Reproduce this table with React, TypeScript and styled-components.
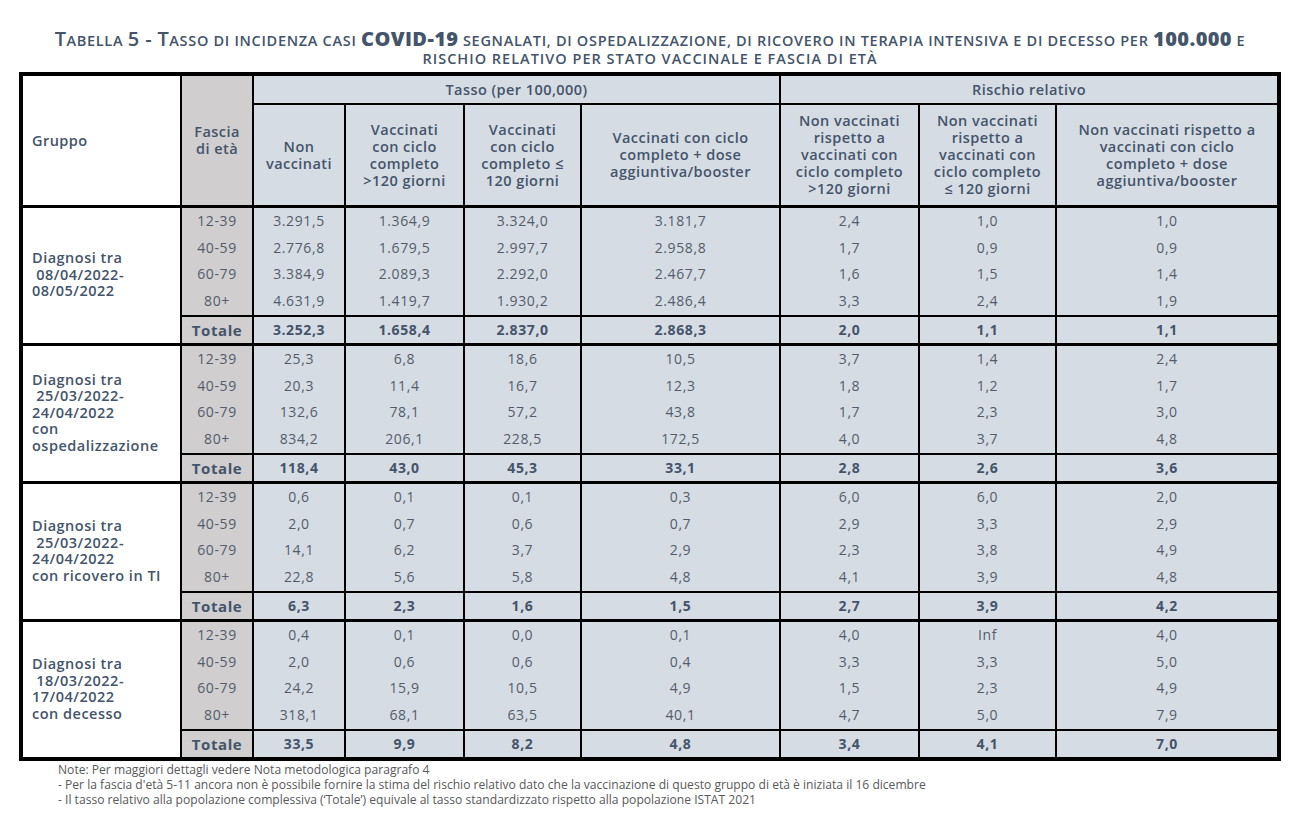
import React from "react";
import styled, { createGlobalStyle } from "styled-components";

const GlobalStyle = createGlobalStyle`
  html, body { margin: 0; padding: 0; background: #ffffff; }
  body { font-family: "Open Sans", Lato, sans-serif; }
`;

const Page = styled.div`
  width: 1300px;
  height: 820px;
  box-sizing: border-box;
  padding-top: 29px;
  display: flex;
  flex-direction: column;
  align-items: stretch;
`;

const Title = styled.h1`
  margin: 0;
  display: flex;
  flex-direction: column;
  align-items: center;
  font-family: "Open Sans", sans-serif;
  text-transform: uppercase;
  font-weight: 600;
  font-size: 14.5px;
  letter-spacing: 0.7px;
  color: #44546a;
  white-space: nowrap;
`;

const TitleLine = styled.span<{ $wide?: boolean }>`
  display: block;
  height: 20px;
  line-height: 20px;
  letter-spacing: ${(p) => (p.$wide ? "1px" : "inherit")};
`;

const Big = styled.span<{ $strong?: boolean }>`
  font-size: 20px;
  font-weight: ${(p) => (p.$strong ? 800 : 600)};
  letter-spacing: 0.4px;
`;

const Table = styled.table`
  margin: 3px 0 0 19px;
  width: 1258px;
  border-collapse: collapse;
  table-layout: fixed;
  border: 4px solid #000;
  font-family: "Open Sans", sans-serif;
  color: #44546a;
`;

const HeadCell = styled.th<{ $bg?: string; $align?: string; $h?: number }>`
  background: ${(p) => p.$bg || "#d6dce4"};
  border: 2px solid #000;
  font-weight: 600;
  font-size: 14.5px;
  letter-spacing: 0.45px;
  line-height: 17px;
  text-align: ${(p) => p.$align || "center"};
  vertical-align: middle;
  padding: ${(p) => (p.$align === "left" ? "0 6px 0 9px" : "0 2px")};
  height: ${(p) => p.$h ?? 28}px;
  box-sizing: border-box;
  color: #44546a;
`;

const Block = styled.tbody`
  border-top: 3px solid #000;
`;

const Row = styled.tr<{ $total?: boolean }>`
  border-top: ${(p) => (p.$total ? "2px solid #000" : "none")};
`;

const GroupCell = styled.td`
  background: #ffffff;
  border-left: 2px solid #000;
  border-right: 2px solid #000;
  font-weight: 600;
  font-size: 14.5px;
  letter-spacing: 0.5px;
  line-height: 16.5px;
  padding: 0 4px 0 9px;
  text-align: left;
  vertical-align: middle;
  white-space: pre;
  color: #44546a;
`;

const Cell = styled.td<{ $age?: boolean; $total?: boolean }>`
  background: ${(p) => (p.$age ? "#d0cece" : "#d6dce4")};
  border-left: 2px solid #000;
  border-right: 2px solid #000;
  text-align: center;
  vertical-align: middle;
  padding: 0;
  height: ${(p) => (p.$total ? 26 : 26.75)}px;
  font-size: ${(p) => (p.$age && p.$total ? 15 : 14)}px;
  letter-spacing: 0.6px;
  font-weight: ${(p) => (p.$total ? 700 : 400)};
  color: ${(p) => (p.$total ? "#44546a" : "#535c6b")};
  line-height: 16px;
`;

const Notes = styled.div`
  margin: 1px 0 0 58px;
  font-family: "Open Sans", sans-serif;
  font-size: 12.1px;
  line-height: 15px;
  color: #595959;
`;

type BlockData = {
  label: string;
  rows: string[][];
  total: string[];
};

const AGES = ["12-39", "40-59", "60-79", "80+"];

const BLOCKS: BlockData[] = [
  {
    label: "Diagnosi tra\n 08/04/2022-\n08/05/2022",
    rows: [
      ["3.291,5", "1.364,9", "3.324,0", "3.181,7", "2,4", "1,0", "1,0"],
      ["2.776,8", "1.679,5", "2.997,7", "2.958,8", "1,7", "0,9", "0,9"],
      ["3.384,9", "2.089,3", "2.292,0", "2.467,7", "1,6", "1,5", "1,4"],
      ["4.631,9", "1.419,7", "1.930,2", "2.486,4", "3,3", "2,4", "1,9"],
    ],
    total: ["3.252,3", "1.658,4", "2.837,0", "2.868,3", "2,0", "1,1", "1,1"],
  },
  {
    label: "Diagnosi tra\n 25/03/2022-\n24/04/2022\ncon\nospedalizzazione",
    rows: [
      ["25,3", "6,8", "18,6", "10,5", "3,7", "1,4", "2,4"],
      ["20,3", "11,4", "16,7", "12,3", "1,8", "1,2", "1,7"],
      ["132,6", "78,1", "57,2", "43,8", "1,7", "2,3", "3,0"],
      ["834,2", "206,1", "228,5", "172,5", "4,0", "3,7", "4,8"],
    ],
    total: ["118,4", "43,0", "45,3", "33,1", "2,8", "2,6", "3,6"],
  },
  {
    label: "Diagnosi tra\n 25/03/2022-\n24/04/2022\ncon ricovero in TI",
    rows: [
      ["0,6", "0,1", "0,1", "0,3", "6,0", "6,0", "2,0"],
      ["2,0", "0,7", "0,6", "0,7", "2,9", "3,3", "2,9"],
      ["14,1", "6,2", "3,7", "2,9", "2,3", "3,8", "4,9"],
      ["22,8", "5,6", "5,8", "4,8", "4,1", "3,9", "4,8"],
    ],
    total: ["6,3", "2,3", "1,6", "1,5", "2,7", "3,9", "4,2"],
  },
  {
    label: "Diagnosi tra\n 18/03/2022-\n17/04/2022\ncon decesso",
    rows: [
      ["0,4", "0,1", "0,0", "0,1", "4,0", "Inf", "4,0"],
      ["2,0", "0,6", "0,6", "0,4", "3,3", "3,3", "5,0"],
      ["24,2", "15,9", "10,5", "4,9", "1,5", "2,3", "4,9"],
      ["318,1", "68,1", "63,5", "40,1", "4,7", "5,0", "7,9"],
    ],
    total: ["33,5", "9,9", "8,2", "4,8", "3,4", "4,1", "7,0"],
  },
];

const COLS = [160, 72, 92, 119, 117, 199, 139, 137, 223];

const SUBHEADS: React.ReactNode[] = [
  <>Non<br />vaccinati</>,
  <>Vaccinati<br />con ciclo<br />completo<br />&gt;120 giorni</>,
  <>Vaccinati<br />con ciclo<br />completo ≤<br />120 giorni</>,
  <>Vaccinati con ciclo<br />completo + dose<br />aggiuntiva/booster</>,
  <>Non vaccinati<br />rispetto a<br />vaccinati con<br />ciclo completo<br />&gt;120 giorni</>,
  <>Non vaccinati<br />rispetto a<br />vaccinati con<br />ciclo completo<br />≤ 120 giorni</>,
  <>Non vaccinati rispetto a<br />vaccinati con ciclo<br />completo + dose<br />aggiuntiva/booster</>,
];

export default function App() {
  return (
    <>
      <GlobalStyle />
      <Page>
        <Title>
          <TitleLine>
            <Big>T</Big>abella <Big>5 - T</Big>asso di incidenza casi{" "}
            <Big $strong>COVID-19</Big> segnalati, di ospedalizzazione, di ricovero in terapia
            intensiva e di decesso per <Big $strong>100.000</Big> e
          </TitleLine>
          <TitleLine $wide>rischio relativo per stato vaccinale e fascia di età</TitleLine>
        </Title>
        <Table>
          <colgroup>
            {COLS.map((w, i) => (
              <col key={i} style={{ width: w }} />
            ))}
          </colgroup>
          <thead>
            <tr>
              <HeadCell rowSpan={2} $bg="#ffffff" $align="left">
                Gruppo
              </HeadCell>
              <HeadCell rowSpan={2} $bg="#d0cece">
                Fascia
                <br />
                di età
              </HeadCell>
              <HeadCell colSpan={4} $h={30}>
                Tasso (per 100,000)
              </HeadCell>
              <HeadCell colSpan={3} $h={30}>
                Rischio relativo
              </HeadCell>
            </tr>
            <tr>
              {SUBHEADS.map((h, i) => (
                <HeadCell key={i} $h={102}>
                  {h}
                </HeadCell>
              ))}
            </tr>
          </thead>
          {BLOCKS.map((b, bi) => (
            <Block key={bi}>
              {b.rows.map((r, ri) => (
                <Row key={ri}>
                  {ri === 0 && <GroupCell rowSpan={5}>{b.label}</GroupCell>}
                  <Cell $age>{AGES[ri]}</Cell>
                  {r.map((v, vi) => (
                    <Cell key={vi}>{v}</Cell>
                  ))}
                </Row>
              ))}
              <Row $total>
                <Cell $age $total>
                  Totale
                </Cell>
                {b.total.map((v, vi) => (
                  <Cell key={vi} $total>
                    {v}
                  </Cell>
                ))}
              </Row>
            </Block>
          ))}
        </Table>
        <Notes>
          Note: Per maggiori dettagli vedere Nota metodologica paragrafo 4
          <br />- Per la fascia d'età 5-11 ancora non è possibile fornire la stima del rischio
          relativo dato che la vaccinazione di questo gruppo di età è iniziata il 16 dicembre
          <br />- Il tasso relativo alla popolazione complessiva (‘Totale’) equivale al tasso
          standardizzato rispetto alla popolazione ISTAT 2021
        </Notes>
      </Page>
    </>
  );
}
